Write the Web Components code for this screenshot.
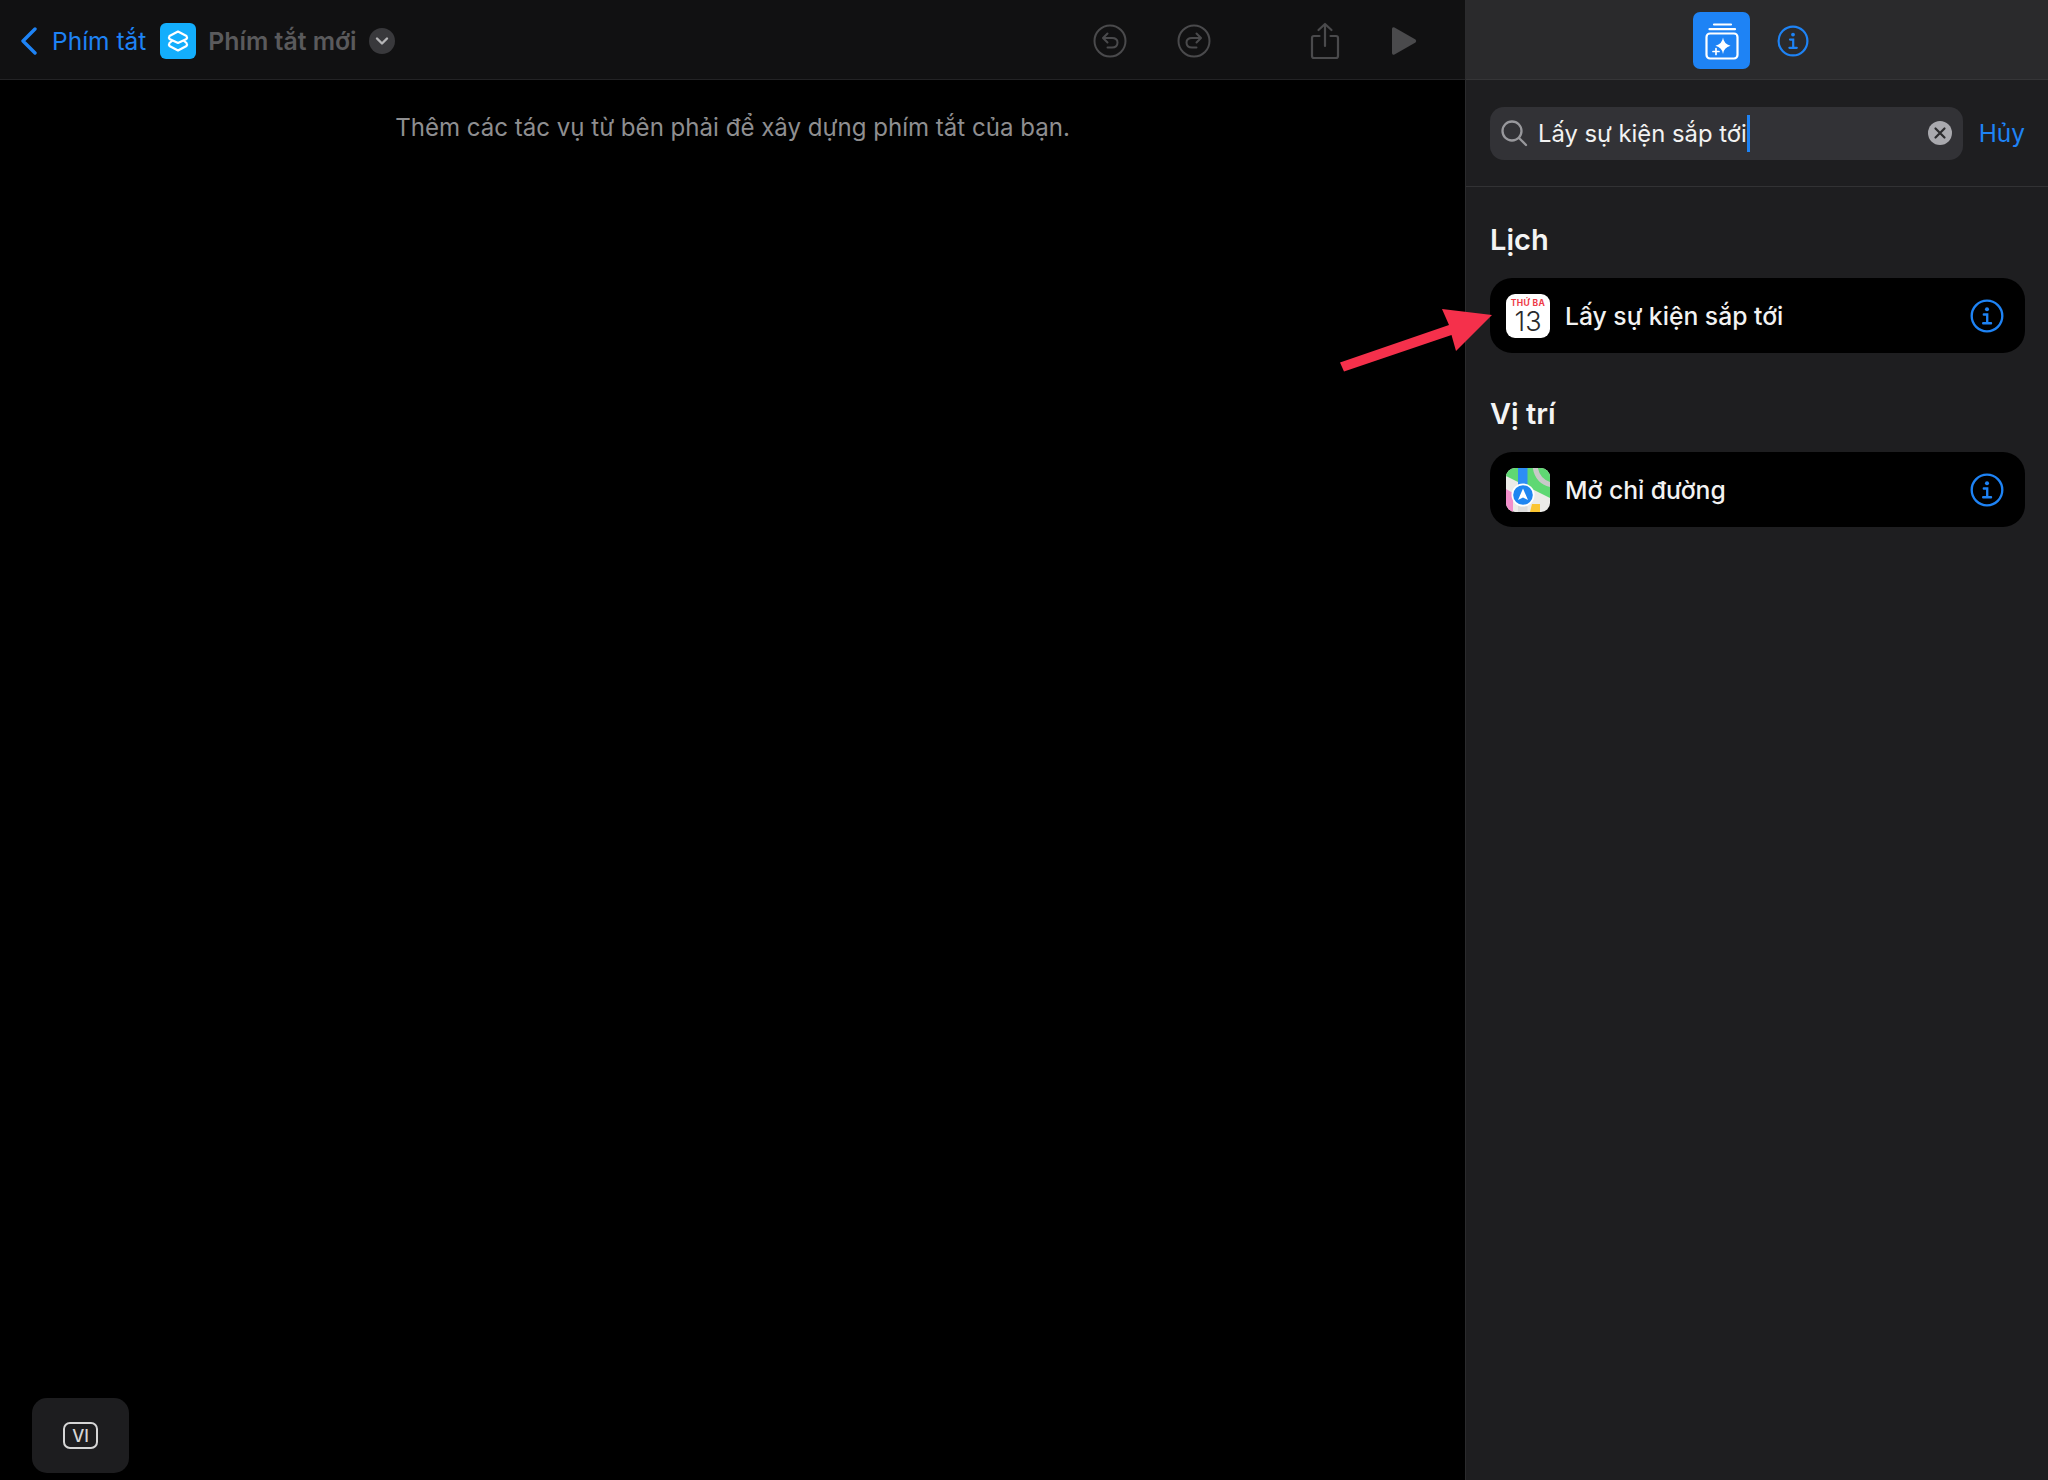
<!DOCTYPE html>
<html lang="vi">
<head>
<meta charset="utf-8">
<title>Phím tắt</title>
<style>
  html, body { margin: 0; height: 100%; background: #000; overflow: hidden; }
  body { font-family: Inter, "Noto Sans", "Liberation Sans", sans-serif; color: #fff; }
</style>
</head>
<body>
<app-shell>
  <editor-pane slot="main"></editor-pane>
  <action-panel slot="side">
    <action-section title="Lịch">
      <action-row label="Lấy sự kiện sắp tới"><calendar-icon></calendar-icon></action-row>
    </action-section>
    <action-section title="Vị trí">
      <action-row label="Mở chỉ đường"><maps-icon></maps-icon></action-row>
    </action-section>
  </action-panel>
</app-shell>

<script>
// vong tron thong tin, dung chung cho header va cac dong
const infoIcon = (size) => `
  <svg width="${size}" height="${size}" viewBox="0 0 32 32" fill="none" stroke="#1e83f5" stroke-width="2.2" stroke-linecap="round">
    <circle cx="16" cy="16" r="14.4"/>
    <circle cx="16" cy="9.6" r="1.9" fill="#1e83f5" stroke="none"/>
    <path d="M13 14.6h3.2v8M12.4 22.8h7.4"/>
  </svg>`;

class AppShell extends HTMLElement {
    constructor() {
        super();
        this.attachShadow({ mode: "open" });
        this.shadowRoot.innerHTML = `
        <style>
          :host { display: flex; width: 2048px; height: 1480px; position: relative; overflow: hidden; }
          .main { flex: 1; min-width: 0; display: flex; }
          .side { width: 583px; flex: none; display: flex; }
          .arrow { position: absolute; left: 1330px; top: 300px; }
        </style>
        <div class="main"><slot name="main"></slot></div>
        <div class="side"><slot name="side"></slot></div>
        <svg class="arrow" width="170" height="80" viewBox="1330 300 170 80">
          <path fill="#f5304b" d="M1340 362.5 L1449 325 L1442 309 L1492 315 L1456 351 L1451.5 335 L1344 371.5 Z"/>
        </svg>`;
    }
}

class EditorPane extends HTMLElement {
    constructor() {
        super();
        this.attachShadow({ mode: "open" });
        this.shadowRoot.innerHTML = `
        <style>
          :host { display: flex; flex-direction: column; flex: 1; background: #000; position: relative; }
          header {
            height: 80px; box-sizing: border-box; flex: none; background: #111112;
            border-bottom: 1px solid #232325; display: flex; align-items: center;
            padding: 3px 48px 0 20px;
          }
          .back { margin-right: 15px; display: block; }
          .back-label { color: #1e83f5; font-size: 24.5px; margin-right: 14px; white-space: nowrap; }
          .shortcut { width: 36px; height: 36px; border-radius: 6px; background: #13aefc; display: flex; align-items: center; justify-content: center; margin-right: 12px; }
          .name { color: #5a5a5c; font-size: 24.8px; font-weight: 600; white-space: nowrap; margin-right: 12px; }
          .more { width: 26px; height: 26px; border-radius: 50%; background: #39393c; display: flex; align-items: center; justify-content: center; }
          .tools { margin-left: auto; display: flex; align-items: center; }
          .tools svg { display: block; }
          .hint { margin: 0; padding-top: 30px; text-align: center; color: #8e8e90; font-size: 24.07px; line-height: 36px; }
          .lang {
            position: absolute; left: 32px; bottom: 7px; width: 97px; height: 75px; box-sizing: border-box;
            background: #1d1d1f; border-radius: 15px; display: flex; align-items: center; justify-content: center;
          }
          .lang span {
            width: 35px; height: 27px; box-sizing: border-box; border: 2px solid #d6d6d6; border-radius: 7px;
            color: #d6d6d6; font-size: 17px; font-weight: 500; display: flex; align-items: center; justify-content: center;
          }
        </style>
        <header>
          <svg class="back" width="17" height="28" viewBox="0 0 17 28" fill="none" stroke="#1e83f5" stroke-width="3.4" stroke-linecap="round" stroke-linejoin="round"><path d="M15 2 L3 14 L15 26"/></svg>
          <span class="back-label">Phím tắt</span>
          <span class="shortcut">
            <svg width="24" height="24" viewBox="0 0 24 24" fill="none" stroke="#fff" stroke-width="2.2" stroke-linejoin="round">
              <path d="M12 2.5 L20.5 7 Q21.5 8.5 20.5 10 L12 14 L3.5 10 Q2.5 8.5 3.5 7 Z"/>
              <path d="M6.5 11.5 L3.5 14 Q2.5 15.5 3.5 17 L12 21.5 L20.5 17 Q21.5 15.5 20.5 14 L17.5 11.5"/>
            </svg>
          </span>
          <span class="name">Phím tắt mới</span>
          <span class="more">
            <svg width="14" height="10" viewBox="0 0 14 10" fill="none" stroke="#b5b5b7" stroke-width="2.4" stroke-linecap="round" stroke-linejoin="round"><path d="M2 2.5 L7 7.5 L12 2.5"/></svg>
          </span>
          <div class="tools">
            <svg style="margin-right:50px" width="34" height="34" viewBox="0 0 34 34" fill="none" stroke="#4a4a4c" stroke-width="2" stroke-linecap="round" stroke-linejoin="round">
              <circle cx="17" cy="17" r="15.5"/>
              <path d="M14.5 9.5 L10 14 L14.5 18.5M10.5 14 H19 Q24.5 14 24.5 18.5 Q24.5 23.5 19 23.5 H14.5"/>
            </svg>
            <svg style="margin-right:99px" width="34" height="34" viewBox="0 0 34 34" fill="none" stroke="#4a4a4c" stroke-width="2" stroke-linecap="round" stroke-linejoin="round">
              <circle cx="17" cy="17" r="15.5"/>
              <path d="M19.5 9.5 L24 14 L19.5 18.5M23.5 14 H15 Q9.5 14 9.5 18.5 Q9.5 23.5 15 23.5 H19.5"/>
            </svg>
            <svg style="margin-right:51px" width="30" height="38" viewBox="0 0 30 38" fill="none" stroke="#4a4a4c" stroke-width="2.2" stroke-linecap="round" stroke-linejoin="round">
              <path d="M9.5 14 H4 Q2 14 2 16 V34 Q2 36 4 36 H26 Q28 36 28 34 V16 Q28 14 26 14 H20.5"/>
              <path d="M15 24 V2 M8.5 8 L15 2 L21.5 8"/>
            </svg>
            <svg width="26" height="30" viewBox="0 0 26 30"><path fill="#4a4a4c" d="M1 3 Q1 .5 3.5 1.5 L24.5 13.5 Q26 15 24.5 16.5 L3.5 28.5 Q1 29.5 1 27 Z"/></svg>
          </div>
        </header>
        <p class="hint">Thêm các tác vụ từ bên phải để xây dựng phím tắt của bạn.</p>
        <div class="lang"><span>VI</span></div>`;
    }
}

class ActionPanel extends HTMLElement {
    constructor() {
        super();
        this.attachShadow({ mode: "open" });
        this.shadowRoot.innerHTML = `
        <style>
          :host { display: flex; flex-direction: column; flex: 1; background: #1e1e20; border-left: 1px solid #2b2b2d; box-sizing: border-box; }
          header {
            height: 80px; box-sizing: border-box; flex: none; background: #2a2a2c; border-bottom: 1px solid #353537;
            display: flex; align-items: center; justify-content: center; gap: 27px; padding: 2px 12px 0 0;
          }
          .tab { width: 57px; height: 57px; background: #1e83f5; border-radius: 7px; display: flex; align-items: center; justify-content: center; }
          header svg { display: block; }
          .search { height: 107px; box-sizing: border-box; flex: none; border-bottom: 1px solid #323234; display: flex; align-items: center; padding: 0 23px 0 24px; gap: 16px; }
          .field { flex: 1; height: 53px; background: #323236; border-radius: 14px; display: flex; align-items: center; padding: 0 11px 0 10px; box-sizing: border-box; }
          .term { font-size: 23.8px; color: #f2f2f2; margin-left: 10px; white-space: nowrap; }
          .caret { width: 3px; height: 37px; background: #1e83f5; }
          .clear { margin-left: auto; display: block; }
          .cancel { color: #1e83f5; font-size: 24.4px; white-space: nowrap; }
          .list { padding: 30px 23px 0 24px; display: flex; flex-direction: column; gap: 38px; }
        </style>
        <header>
          <span class="tab">
            <svg width="38" height="38" viewBox="0 0 38 38" fill="none" stroke="#fff" stroke-width="2.2" stroke-linecap="round">
              <path d="M11 2.5 H28 M6.5 7.2 H32"/>
              <rect x="3.5" y="11.5" width="31" height="25" rx="3.5"/>
              <path fill="#fff" stroke="none" d="M20 15.5 Q20.8 22 27.5 23.8 Q20.8 25.5 20 32 Q19.2 25.5 12.5 23.8 Q19.2 22 20 15.5 Z"/>
              <path stroke-width="1.7" d="M13 26.5 V32.5 M10 29.5 H16"/>
            </svg>
          </span>
          ${infoIcon(32)}
        </header>
        <div class="search">
          <div class="field">
            <svg width="28" height="28" viewBox="0 0 28 28" fill="none" stroke="#98989c" stroke-width="2.3" stroke-linecap="round"><circle cx="12" cy="12" r="9.5"/><path d="M19 19 L26 26"/></svg>
            <span class="term">Lấy sự kiện sắp tới</span><span class="caret"></span>
            <svg class="clear" width="24" height="24" viewBox="0 0 24 24"><circle cx="12" cy="12" r="12" fill="#a9a9ae"/><path d="M7.5 7.5 L16.5 16.5 M16.5 7.5 L7.5 16.5" stroke="#2c2c2e" stroke-width="2.2" stroke-linecap="round"/></svg>
          </div>
          <span class="cancel">Hủy</span>
        </div>
        <div class="list"><slot></slot></div>`;
    }
}

class ActionSection extends HTMLElement {
    constructor() {
        super();
        this.attachShadow({ mode: "open" });
        this.shadowRoot.innerHTML = `
        <style>
          :host { display: block; }
          h2 { margin: 0 0 15px; font-size: 29px; line-height: 46px; font-weight: 600; color: #f4f4f4; }
        </style>
        <h2></h2>
        <slot></slot>`;
    }

    connectedCallback() {
        this.shadowRoot.querySelector("h2").textContent = this.getAttribute("title");
    }
}

class ActionRow extends HTMLElement {
    constructor() {
        super();
        this.attachShadow({ mode: "open" });
        this.shadowRoot.innerHTML = `
        <style>
          :host { display: flex; align-items: center; height: 75px; background: #000; border-radius: 22px; padding: 0 21px 0 16px; box-sizing: border-box; }
          .label { margin-left: 15px; font-size: 24.7px; font-weight: 500; color: #f2f2f2; white-space: nowrap; }
          .info { margin-left: auto; display: flex; }
        </style>
        <slot></slot>
        <span class="label"></span>
        <span class="info">${infoIcon(34)}</span>`;
    }

    connectedCallback() {
        this.shadowRoot.querySelector(".label").textContent = this.getAttribute("label");
    }
}

class CalendarIcon extends HTMLElement {
    constructor() {
        super();
        this.attachShadow({ mode: "open" });
        this.shadowRoot.innerHTML = `
        <style>
          :host { display: flex; flex-direction: column; align-items: center; width: 44px; height: 44px; flex: none; background: #fff; border-radius: 9px; overflow: hidden; }
          .day { color: #ee3a47; font-size: 8.5px; font-weight: 700; line-height: 9px; margin-top: 5px; letter-spacing: .4px; white-space: nowrap; }
          .num { color: #2a2a2c; font-size: 27px; font-weight: 300; line-height: 28px; }
        </style>
        <span class="day">THỨ BA</span>
        <span class="num">13</span>`;
    }
}

class MapsIcon extends HTMLElement {
    constructor() {
        super();
        this.attachShadow({ mode: "open" });
        this.shadowRoot.innerHTML = `
        <style>
          :host { display: block; width: 44px; height: 44px; flex: none; border-radius: 9px; overflow: hidden; }
          svg { display: block; }
        </style>
        <svg width="44" height="44" viewBox="0 0 44 44">
          <rect width="44" height="44" fill="#ecebe8"/>
          <path fill="#5fd873" d="M0 0 H44 V30 L26 21 L0 8 Z"/>
          <path fill="none" stroke="#c9c9c9" stroke-width="5" d="M29 -2 Q31 14 46 17"/>
          <path fill="#f28fcb" d="M0 21 L7 25 V44 H0 Z"/>
          <path fill="#fbc531" d="M24 44 L26 36 L34 36 L34 44 Z"/>
          <rect x="12" y="0" width="9.5" height="20" fill="#2d8df5"/>
          <rect x="12" y="36" width="9.5" height="8" fill="#dcdcdc"/>
          <circle cx="17" cy="27" r="11.5" fill="#fff"/>
          <circle cx="17" cy="27" r="9.8" fill="#1f86f1"/>
          <path fill="#fff" d="M17 20.5 L22 32 L17 29.5 L12 32 Z"/>
        </svg>`;
    }
}

customElements.define("app-shell", AppShell);
customElements.define("editor-pane", EditorPane);
customElements.define("action-panel", ActionPanel);
customElements.define("action-section", ActionSection);
customElements.define("action-row", ActionRow);
customElements.define("calendar-icon", CalendarIcon);
customElements.define("maps-icon", MapsIcon);
</script>
</body>
</html>
